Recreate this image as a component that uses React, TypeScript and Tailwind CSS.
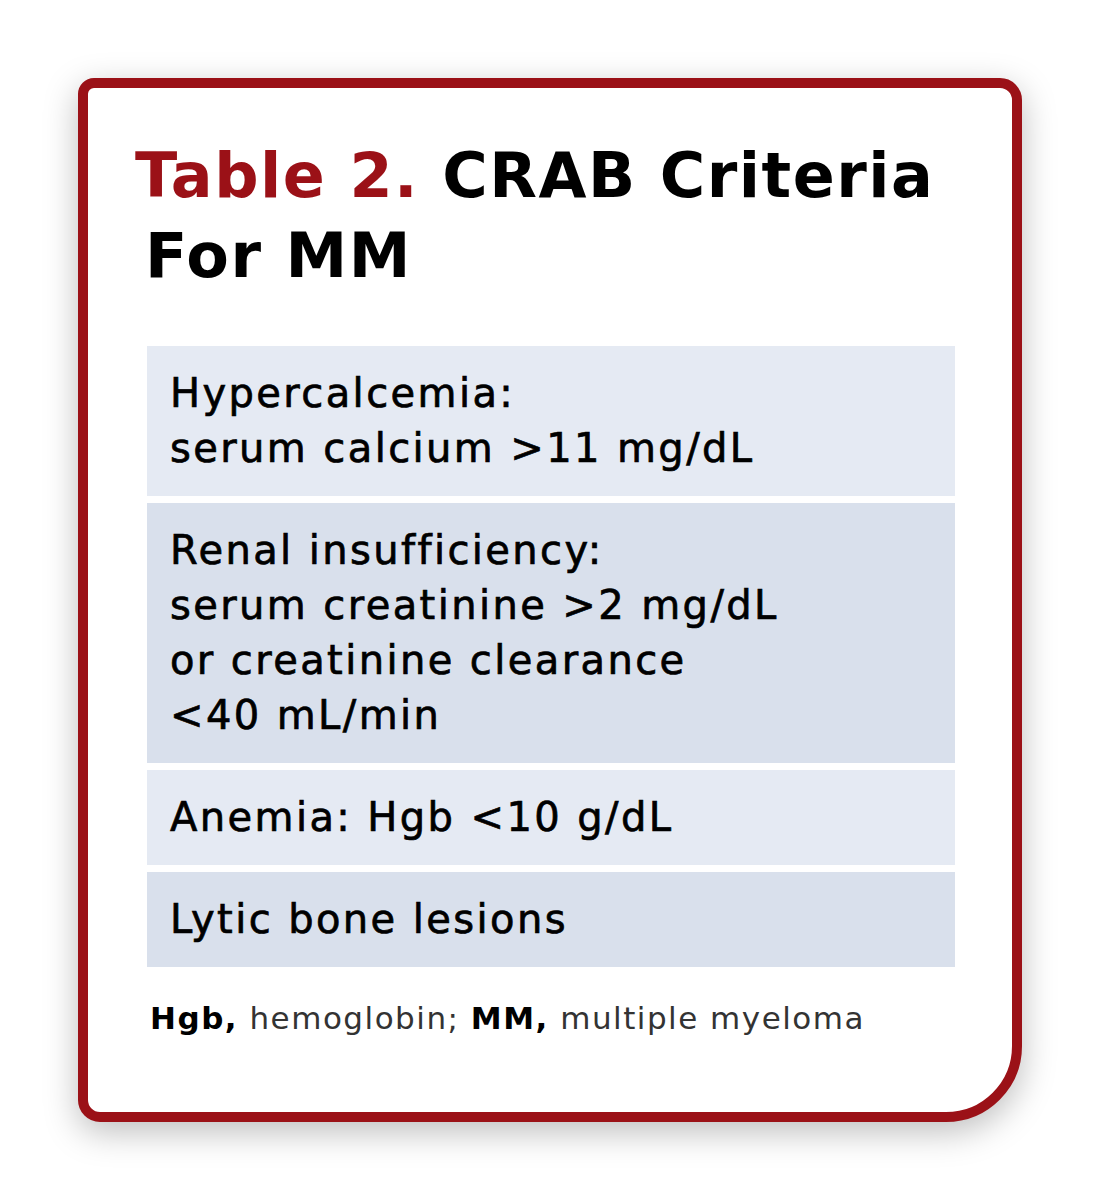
export default function App() {
  const rows = [
    { lines: ["Hypercalcemia:", "serum calcium >11 mg/dL"], bg: "bg-[#e5eaf3]" },
    {
      lines: ["Renal insufficiency:", "serum creatinine >2 mg/dL", "or creatinine clearance", "<40 mL/min"],
      bg: "bg-[#d9e0ec]",
    },
    { lines: ["Anemia: Hgb <10 g/dL"], bg: "bg-[#e5eaf3]" },
    { lines: ["Lytic bone lesions"], bg: "bg-[#d9e0ec]" },
  ];

  return (
    <div className="min-h-screen bg-white pt-[78px] pl-[78px]" style={{ fontFamily: '"DejaVu Sans", sans-serif' }}>
      <div className="w-[944px] h-[1044px] bg-white border-[10px] border-[#9b1117] rounded-tl-[16px] rounded-tr-[22px] rounded-bl-[22px] rounded-br-[76px] shadow-[0_10px_34px_rgba(0,0,0,0.26)]">
        <h1 className="pl-[47px] pt-[48px] text-[62px] leading-[80px] font-bold tracking-[1.5px] text-black">
          <span className="text-[#9b1117]">Table 2.</span> CRAB Criteria
          <br />
          <span className="pl-[10px]">For MM</span>
        </h1>

        <div className="ml-[59px] mt-[50px] w-[808px] flex flex-col gap-[7px]">
          {rows.map((r, i) => (
            <div
              key={i}
              className={`${r.bg} px-[23px] py-[20px] text-[40px] leading-[55px] tracking-[2.4px] text-black [-webkit-text-stroke:0.7px_black]`}
            >
              {r.lines.map((l, j) => (
                <div key={j}>{l}</div>
              ))}
            </div>
          ))}
        </div>

        <p className="ml-[62px] mt-[28px] text-[31px] tracking-[1.5px] text-[#333]">
          <b className="text-black">Hgb,</b> hemoglobin; <b className="text-black">MM,</b> multiple myeloma
        </p>
      </div>
    </div>
  );
}
